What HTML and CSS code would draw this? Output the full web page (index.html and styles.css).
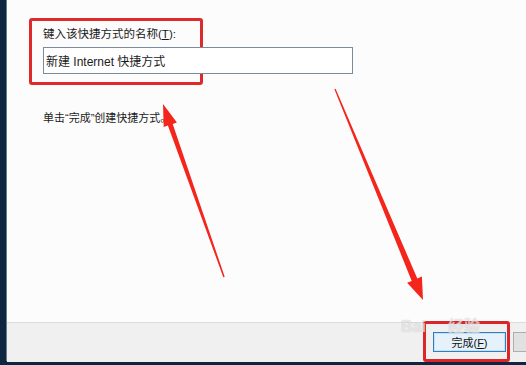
FILE: index.html
```html
<!DOCTYPE html>
<html lang="zh-CN">
<head>
    <meta charset="UTF-8">
    <title>创建快捷方式</title>
    <link rel="stylesheet" href="styles.css">
</head>
<body>
    <div class="fenetre">
        <div class="contenu">
            <div class="cadre">
                <label for="nom" class="etiquette">键入该快捷方式的名称(<u>T</u>):</label>
                <input type="text" id="nom" class="champ" value="新建 Internet 快捷方式">
            </div>
            <p class="aide">单击“完成”创建快捷方式。</p>
        </div>
        <div class="pied">
            <div class="cadre-bouton">
                <button type="button" class="bouton">完成(<u>F</u>)</button>
            </div>
            <button type="button" class="bouton-gris"></button>
        </div>
    </div>
    <div class="filigrane">Bai<span>经验</span></div>
    <svg class="fleches" width="526" height="365" viewBox="0 0 526 365">
        <polygon points="163,104 176.9,122.4 172.7,123.9 224.7,276.8 223.3,277.2 167.9,125.5 163.7,127" />
        <polygon points="423,300 407.1,282.8 411.7,280.9 334.4,89.3 335.6,88.7 417.3,278.5 421.9,276.6" />
    </svg>
</body>
</html>
```

FILE: styles.css
```css
body {
    margin: 0;
    width: 526px;
    height: 365px;
    background-color: #0e2640;
    font-family: "Liberation Sans", "Noto Sans CJK SC", sans-serif;
    color: #1a1a1a;
    overflow: hidden;
    position: relative;
}
.fenetre {
    margin-left: 6px;
    height: 361px;
    display: flex;
    flex-direction: column;
    border-left: 1px solid #6c7b8c;
}
.contenu {
    background-color: #fcfcfc;
    height: 322px;
    flex-shrink: 0;
    padding: 18px 0 0 22px;
    box-sizing: border-box;
}
.cadre {
    width: 157px;
    height: 55px;
    border: 3px solid #de2a2a;
    border-radius: 3px;
    padding: 6px 0 0 11px;
    position: relative;
}
.etiquette {
    display: block;
    font-size: 11.5px;
    line-height: 14px;
    height: 20px;
}
.champ {
    width: 310px;
    height: 27px;
    box-sizing: border-box;
    border: 1px solid #7a8c9c;
    padding: 0 2px;
    font-family: inherit;
    font-size: 12px;
    color: #1a1a1a;
    background-color: #ffffff;
    margin: 0;
}
.aide {
    margin: 26px 0 0 14px;
    font-size: 11px;
    line-height: 14px;
}
.pied {
    flex: 1;
    background-color: #f0f0f0;
    border-top: 1px solid #dcdcdc;
    display: flex;
    justify-content: flex-end;
    align-items: flex-start;
}
.cadre-bouton {
    border: 3px solid #d9262b;
    border-radius: 3px;
    padding: 8px 1px 7px 7px;
    margin-top: -2px;
    margin-right: 3px;
}
.bouton {
    display: block;
    width: 73px;
    height: 20px;
    border: 1px solid #2f7fc0;
    background-color: #e5f1fb;
    font-family: inherit;
    font-size: 11px;
    color: #111;
    padding: 0;
    box-shadow: inset 0 0 0 1px #c6e0f5;
}
.bouton-gris {
    width: 20px;
    height: 20px;
    border: 1px solid #adadad;
    background-color: #e1e1e1;
    margin-right: -7px;
    margin-top: 9px;
}
.filigrane {
    position: absolute;
    left: 401px;
    top: 318px;
    font-family: "Liberation Sans", sans-serif;
    font-size: 16px;
    line-height: 15px;
    font-weight: bold;
    color: rgba(255, 255, 255, 0.6);
    text-shadow: 0 0 1px rgba(120, 120, 120, 0.45);
    pointer-events: none;
}
.filigrane span {
    font-family: "Noto Sans CJK SC", sans-serif;
    margin-left: 22px;
}
.fleches {
    position: absolute;
    left: 0;
    top: 0;
    fill: #f4261c;
}
```
